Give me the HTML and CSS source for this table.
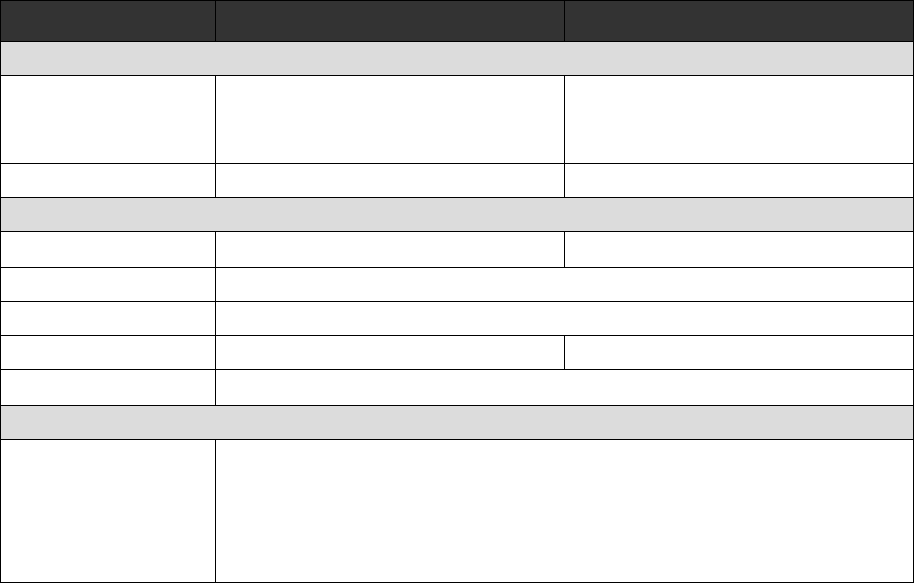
FILE: index.html
```html
<!DOCTYPE html>
<html>
<head>
<meta charset="utf-8">
<link rel="stylesheet" href="styles.css">
</head>
<body>
<table class="spec">
  <colgroup>
    <col class="c1"><col class="c2"><col class="c3">
  </colgroup>
  <thead>
    <tr class="h-head"><th></th><th></th><th></th></tr>
  </thead>
  <tbody>
    <tr class="h-sm group"><td colspan="3"></td></tr>
    <tr class="h-tall"><td></td><td></td><td></td></tr>
    <tr class="h-sm"><td></td><td></td><td></td></tr>
    <tr class="h-sm group"><td colspan="3"></td></tr>
    <tr class="h-md"><td></td><td></td><td></td></tr>
    <tr class="h-sm"><td></td><td colspan="2"></td></tr>
    <tr class="h-sm"><td></td><td colspan="2"></td></tr>
    <tr class="h-sm"><td></td><td></td><td></td></tr>
    <tr class="h-md"><td></td><td colspan="2"></td></tr>
    <tr class="h-sm group"><td colspan="3"></td></tr>
    <tr class="h-xl"><td></td><td colspan="2"></td></tr>
  </tbody>
</table>
</body>
</html>
```

FILE: styles.css
```css
html, body {
  margin: 0;
  padding: 0;
  background: #ffffff;
  font-family: "Liberation Sans", Arial, sans-serif;
}

.spec {
  table-layout: fixed;
  width: 914px;
  border-collapse: separate;
  border-spacing: 1px;
  background: #000000;
}

.c1 { width: 214px; }
.c2 { width: 348px; }
.c3 { width: 348px; }

.spec th,
.spec td {
  padding: 0;
  border: 0;
  background: #ffffff;
}

.spec th {
  background: #333333;
}

.group td {
  background: #dcdcdc;
}

.h-head th { height: 40px; }
.h-sm td { height: 33px; }
.h-md td { height: 35px; }
.h-tall td { height: 87px; }
.h-xl td { height: 142px; }
```
